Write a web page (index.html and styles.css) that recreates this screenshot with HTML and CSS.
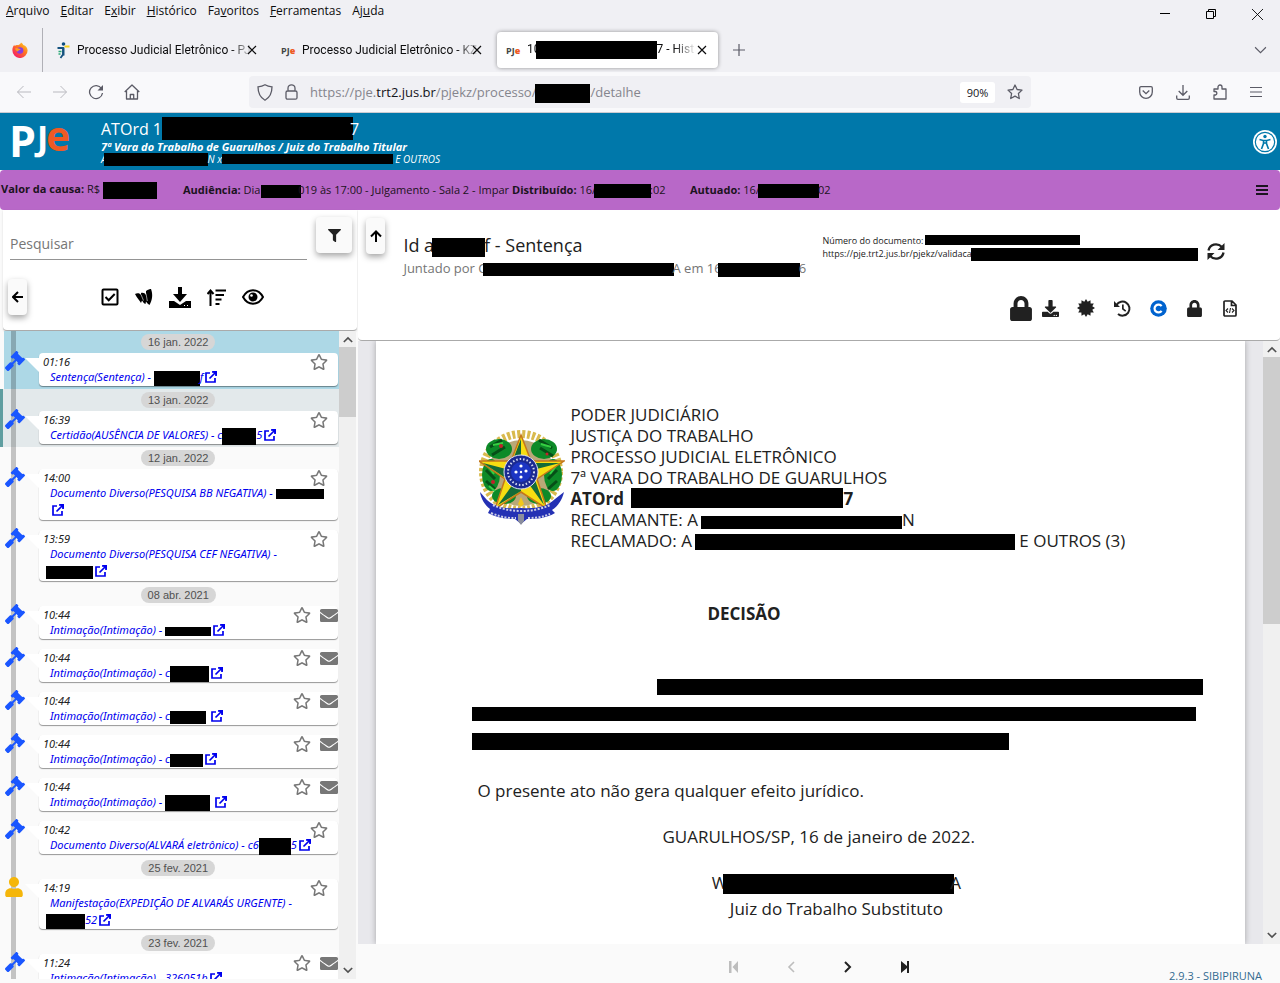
FILE: index.html
```html
<!DOCTYPE html>
<html lang="pt-BR">
<head>
<meta charset="utf-8">
<meta name="viewport" content="width=device-width, initial-scale=1">
<title>Processo Judicial Eletrônico</title>
<link rel="stylesheet" href="styles.css">
</head>
<body>
<svg class="defs" aria-hidden="true">
  <symbol id="gavel" viewBox="0 0 512 512"><path d="M504.971 199.362l-22.627-22.627c-9.373-9.373-24.569-9.373-33.941 0l-5.657 5.657L329.608 69.255l5.657-5.657c9.373-9.373 9.373-24.569 0-33.941L312.638 7.029c-9.373-9.373-24.569-9.373-33.941 0L154.246 131.48c-9.373 9.373-9.373 24.569 0 33.941l22.627 22.627c9.373 9.373 24.569 9.373 33.941 0l5.657-5.657 39.598 39.598-81.04 81.04-5.657-5.657c-12.497-12.497-32.758-12.497-45.255 0L9.373 412.118c-12.497 12.497-12.497 32.758 0 45.255l45.255 45.255c12.497 12.497 32.758 12.497 45.255 0l114.745-114.745c12.497-12.497 12.497-32.758 0-45.255l-5.657-5.657 81.04-81.04 39.598 39.598-5.657 5.657c-9.373 9.373-9.373 24.569 0 33.941l22.627 22.627c9.373 9.373 24.569 9.373 33.941 0l124.451-124.451c9.372-9.372 9.372-24.568 0-33.941z"/></symbol>
  <symbol id="star" viewBox="0 0 576 512"><path d="M528.1 171.5L382 150.2 316.7 17.8c-11.7-23.6-45.6-23.9-57.4 0L194 150.2 47.9 171.5c-26.2 3.8-36.7 36.1-17.7 54.6l105.7 103-25 145.5c-4.5 26.3 23.2 46 46.4 33.7L288 439.6l130.7 68.7c23.2 12.2 50.9-7.4 46.4-33.7l-25-145.5 105.7-103c19-18.5 8.5-50.8-17.7-54.6zM388.6 312.3l23.7 138.4L288 385.4l-124.3 65.3 23.7-138.4-100.6-98 139-20.2 62.2-126 62.2 126 139 20.2-100.6 98z"/></symbol>
  <symbol id="mail" viewBox="0 64 512 384" preserveAspectRatio="none"><path d="M502.3 190.8c3.9-3.1 9.7-.2 9.7 4.7V400c0 26.5-21.5 48-48 48H48c-26.5 0-48-21.5-48-48V195.6c0-5 5.7-7.8 9.7-4.7 22.4 17.4 52.1 39.5 154.1 113.6 21.1 15.4 56.7 47.8 92.2 47.6 35.7.3 72-32.8 92.3-47.6 102-74.1 131.6-96.3 154-113.7zM256 320c23.2.4 56.6-29.2 73.4-41.4 132.7-96.3 142.8-104.7 173.4-128.7 5.8-4.5 9.2-11.5 9.2-18.9v-19c0-26.5-21.5-48-48-48H48c-26.5 0-48 21.5-48 48v19c0 7.4 3.4 14.3 9.2 18.9 30.6 23.9 40.7 32.4 173.4 128.7 16.8 12.2 50.2 41.8 73.4 41.4z"/></symbol>
  <symbol id="ext" viewBox="0 0 12 12"><path d="M5 2H1v9h9V7M7 1h4v4M11 1L4.500 7.500" fill="none" stroke="currentColor" stroke-width="1.700"/><path d="M7 0h5v5z"/></symbol>
  <symbol id="lock" viewBox="0 0 448 512"><path d="M400 224h-24v-72C376 68.200 307.800 0 224 0S72 68.200 72 152v72H48c-26.500 0-48 21.500-48 48v192c0 26.500 21.500 48 48 48h352c26.500 0 48-21.500 48-48V272c0-26.500-21.500-48-48-48zm-104 0H152v-72c0-39.700 32.300-72 72-72s72 32.300 72 72v72z"/></symbol>
  <symbol id="download" viewBox="0 0 512 512"><path d="M216 0h80c13.300 0 24 10.700 24 24v168h87.700c17.800 0 26.700 21.500 14.100 34.100L269.700 378.300c-7.500 7.500-19.800 7.500-27.300 0L90.100 226.100c-12.600-12.600-3.700-34.100 14.100-34.100H192V24c0-13.300 10.700-24 24-24zm296 376v112c0 13.300-10.700 24-24 24H24c-13.300 0-24-10.700-24-24V376c0-13.300 10.700-24 24-24h146.700l49 49c20.100 20.100 52.500 20.100 72.600 0l49-49H488c13.300 0 24 10.700 24 24zm-124 88c0-11-9-20-20-20s-20 9-20 20 9 20 20 20 20-9 20-20zm64 0c0-11-9-20-20-20s-20 9-20 20 9 20 20 20 20-9 20-20z"/></symbol>
  <symbol id="user" viewBox="0 0 448 512"><path d="M224 256c70.700 0 128-57.300 128-128S294.700 0 224 0 96 57.300 96 128s57.300 128 128 128zm89.600 32h-16.700c-22.200 10.200-46.900 16-72.900 16s-50.600-5.800-72.900-16h-16.700C60.200 288 0 348.200 0 422.400V464c0 26.500 21.500 48 48 48h352c26.500 0 48-21.500 48-48v-41.600c0-74.200-60.200-134.400-134.400-134.400z"/></symbol>
  <symbol id="x" viewBox="0 0 10 10"><path d="M1 1l8 8M9 1L1 9" fill="none" stroke="currentColor" stroke-width="1.200"/></symbol>
  <symbol id="arrow" viewBox="0 0 16 16"><path d="M15 8H1.500M7.500 2l-6 6 6 6" fill="none" stroke="currentColor"/></symbol>
  <symbol id="chev" viewBox="0 0 12 8"><path d="M1 1l5 5 5-5" fill="none" stroke="currentColor"/></symbol>
  <symbol id="bars" viewBox="0 0 12 12"><path d="M0 1.500h12M0 6h12M0 10.500h12" fill="none" stroke="currentColor" stroke-width="1.200"/></symbol>
</svg>

<header class="chrome">
  <nav class="menubar" aria-label="Menu">
    <button><u>A</u>rquivo</button><button><u>E</u>ditar</button><button>E<u>x</u>ibir</button><button><u>H</u>istórico</button><button>Fa<u>v</u>oritos</button><button><u>F</u>erramentas</button><button>Aj<u>u</u>da</button>
    <span class="winbtns">
      <button aria-label="Minimizar"><svg width="10" height="10" viewBox="0 0 10 10"><path d="M0 4.500h10" stroke="#000"/></svg></button>
      <button aria-label="Restaurar"><svg width="10" height="10" viewBox="0 0 10 10"><path d="M.5 2.500h7v7h-7zM2.500 2.500v-2h7v7h-2" fill="none" stroke="#000"/></svg></button>
      <button aria-label="Fechar"><svg width="11" height="11" viewBox="0 0 10 10"><path d="M0 0l10 10M10 0L0 10" stroke="#000" stroke-width=".8"/></svg></button>
    </span>
  </nav>
  <div class="tabs">
    <div class="pinned"><svg width="16" height="16" viewBox="0 0 16 16"><defs><linearGradient id="fx" x1="1" y1="0" x2=".2" y2="1"><stop offset="0" stop-color="#ffe226"/><stop offset=".45" stop-color="#ff7a1f"/><stop offset="1" stop-color="#f5156c"/></linearGradient></defs><path d="M9 .5c1.500.8 2 2 2.300 2.500 2.500.5 4.300 3 4.300 5.500A7.600 7.600 0 0 1 .4 8.400C.3 6 1 4.300 2.300 2.700c0 .7.200 1 .4 1.200C4 3 5 3 6 3.200 7.200 2.500 8.600 2 9 .5z" fill="url(#fx)"/><circle cx="8" cy="8.500" r="3.300" fill="#8a3ce0"/><path d="M3 6.500c1.500-1 3-.7 4 .2 1 0 1.500.3 1.700.8-1 .8-2.600.6-2.700 2-1 0-2.500-1-3-3z" fill="#ff9a1f"/></svg></div>
    <div class="tab">
      <svg width="15" height="17" viewBox="0 0 14 17"><circle cx="7" cy="2" r="1.800" fill="#0d4f80"/><path d="M1 6h5.500v6.500L4 16" fill="none" stroke="#14527f" stroke-width="1.800"/><path d="M7 5.500v8" stroke="#14527f" stroke-width="2"/><path d="M8 4.500h5" stroke="#f6d117" stroke-width="2"/><path d="M2 9.500h3M2 12h2" stroke="#2aa876" stroke-width="1.500"/></svg>
      <span class="tab-title">Processo Judicial Eletrônico - PJ</span>
      <button class="close" aria-label="Fechar aba"><svg width="10" height="10"><use href="#x"/></svg></button>
    </div>
    <div class="tab">
      <span class="fav">PJ<b>e</b></span>
      <span class="tab-title">Processo Judicial Eletrônico - KZ</span>
      <button class="close" aria-label="Fechar aba"><svg width="10" height="10"><use href="#x"/></svg></button>
    </div>
    <div class="tab active">
      <span class="fav">PJ<b>e</b></span>
      <span class="tab-title">10<i class="bar" style="width:121px;height:18px"></i>7 - Hist</span>
      <button class="close" aria-label="Fechar aba"><svg width="10" height="10"><use href="#x"/></svg></button>
    </div>
    <button class="newtab" aria-label="Nova aba"><svg width="12" height="12" viewBox="0 0 12 12"><path d="M6 0v12M0 6h12" stroke="#5b5b66" stroke-width="1.200"/></svg></button>
    <button class="alltabs" aria-label="Listar abas"><svg width="13" height="9"><use href="#chev"/></svg></button>
  </div>
  <div class="navbar">
    <div class="navbtns">
      <button class="off" aria-label="Voltar"><svg width="16" height="16"><use href="#arrow"/></svg></button>
      <button class="off flip" aria-label="Avançar"><svg width="16" height="16"><use href="#arrow"/></svg></button>
      <button aria-label="Recarregar"><svg width="16" height="16" viewBox="0 0 16 16"><path d="M13.500 4.500A6.500 6.500 0 1 0 14.500 9" fill="none" stroke="currentColor" stroke-width="1.300"/><path d="M15 1v5.500H9.500z" fill="currentColor"/></svg></button>
      <button aria-label="Início"><svg width="16" height="16" viewBox="0 0 16 16"><path d="M.7 8L8 1l7.300 7M2.500 7v8h11V7M6.300 15v-4.500h3.400V15" fill="none" stroke="currentColor" stroke-width="1.300" stroke-linejoin="round"/></svg></button>
    </div>
    <div class="urlbar">
      <svg width="16" height="17" viewBox="0 0 16 17"><path d="M8 .8c2 1.200 4 1.800 7 2 0 6-1.500 10.500-7 13.400C2.500 13.300 1 8.800 1 2.800c3-.2 5-.8 7-2z" fill="none" stroke="#5b5b66" stroke-width="1.300"/></svg>
      <svg width="13" height="16" viewBox="0 0 13 16"><path d="M3 7V4.300a3.500 3.500 0 0 1 7 0V7M2.500 7h8a1.500 1.500 0 0 1 1.500 1.500v5.200a1.500 1.500 0 0 1-1.500 1.500h-8A1.500 1.500 0 0 1 1 13.700V8.500A1.500 1.500 0 0 1 2.500 7z" fill="none" stroke="#5b5b66" stroke-width="1.300"/></svg>
      <span class="url">https://pje.<strong>trt2.jus.br</strong>/pjekz/processo/<i class="bar" style="width:55px;height:19px"></i>/detalhe</span>
      <button class="zoom">90%</button>
      <button aria-label="Favoritar"><svg width="16" height="16" viewBox="0 0 16 16"><path d="M8 1l2.100 4.500 4.900.6-3.600 3.400.9 5L8 12.100 3.700 14.500l.9-5L1 6.100l4.900-.6z" fill="none" stroke="currentColor" stroke-width="1.300" stroke-linejoin="round"/></svg></button>
    </div>
    <div class="tools">
      <button aria-label="Pocket"><svg width="14" height="13" viewBox="0 0 14 13"><path d="M2 .7h10A1.300 1.300 0 0 1 13.300 2v4A6.300 6.300 0 0 1 .7 6V2A1.300 1.300 0 0 1 2 .7zM3.700 4.500L7 7.700l3.300-3.200" fill="none" stroke="currentColor" stroke-width="1.300"/></svg></button>
      <button aria-label="Downloads"><svg width="14" height="15" viewBox="0 0 14 15"><path d="M7 0v10M2.700 6L7 10.300 11.300 6M.7 10.500V13a1.300 1.300 0 0 0 1.300 1.300h10a1.300 1.300 0 0 0 1.300-1.300v-2.500" fill="none" stroke="currentColor" stroke-width="1.300"/></svg></button>
      <button aria-label="Extensões"><svg width="14" height="16" viewBox="0 0 14 16"><path d="M1 5h4V3a2 2 0 0 1 4 0v2h4v10H1v-4h1.500a1.800 1.800 0 0 0 0-3.500H1z" fill="none" stroke="currentColor" stroke-width="1.300" stroke-linejoin="round"/></svg></button>
      <button aria-label="Abrir menu"><svg width="12" height="12"><use href="#bars"/></svg></button>
    </div>
  </div>
</header>

<section class="case">
  <svg class="logo" width="58" height="40" viewBox="0 0 58 40" role="img" aria-label="PJe"><text class="logo-p" x="-3" y="36">P</text><text class="logo-j" x="25" y="29">J</text><text class="logo-e" x="34" y="30">e</text></svg>
  <div class="case-text">
    <h1>ATOrd 1<i class="bar" style="width:191px;height:23px"></i>7</h1>
    <p class="court">7ª Vara do Trabalho de Guarulhos / Juiz do Trabalho Titular</p>
    <p class="parties">A<i class="bar" style="width:104px;height:13px"></i>N x <i class="bar" style="width:171px;height:10px"></i> E OUTROS</p>
  </div>
  <button class="a11y" aria-label="Acessibilidade"><svg width="24" height="24" viewBox="0 0 24 24"><circle cx="12" cy="12" r="12" fill="#fff"/><circle cx="12" cy="12" r="9.700" fill="none" stroke="#0078aa" stroke-width="1.200"/><circle cx="12" cy="6.500" r="1.700" fill="#0078aa"/><path d="M6.500 9.500l4 1v3l-2 5.500M17.500 9.500l-4 1v3l2 5.500M10 10.500h4M10.500 13h3" fill="none" stroke="#0078aa" stroke-width="1.600"/></svg></button>
</section>

<section class="info">
  <span class="causa"><b>Valor da causa:</b> R$ <i class="bar" style="width:54px;height:17px"></i></span>
  <span class="hearing"><b>Audiência:</b> Dia <i class="bar" style="width:40px;height:13px"></i>019 às 17:00 - Julgamento - Sala 2 - Impar</span>
  <span class="dist"><b>Distribuído:</b> 16/<i class="bar" style="width:57px;height:14px"></i>:02</span>
  <span><b>Autuado:</b> 16/<i class="bar" style="width:61px;height:14px"></i>02</span>
  <button aria-label="Menu do processo"><svg width="12" height="12" viewBox="0 0 12 12"><path d="M0 2h12M0 6h12M0 10h12" stroke="#1b1320" stroke-width="2"/></svg></button>
</section>

<main class="work">
  <aside class="side">
    <div class="side-head">
      <div class="search"><input type="text" placeholder="Pesquisar" aria-label="Pesquisar">
        <button class="raised square" aria-label="Filtrar"><svg width="13" height="13" viewBox="0 0 512 512"><path d="M487.976 0H24.028C2.710 0-8.047 25.866 7.058 40.971L192 225.941V432c0 7.831 3.821 15.170 10.237 19.662l80 55.980C298.020 518.690 320 507.493 320 487.980V225.941l184.947-184.970C520.021 25.896 509.338 0 487.976 0z"/></svg></button></div>
      <div class="side-tools">
        <button class="raised slim" aria-label="Recolher"><svg width="11" height="12" viewBox="0 0 11 12"><path d="M11 6H1.500M6 1L1 6l5 5" fill="none" stroke="#000" stroke-width="2"/></svg></button>
        <div class="acts">
          <button aria-label="Selecionar"><svg width="18" height="18" viewBox="0 0 18 18"><rect x="1.500" y="1.500" width="15" height="15" rx="1" fill="none" stroke="#000" stroke-width="2"/><path d="M4.500 9l3.200 3.200 6-6.200" fill="none" stroke="#000" stroke-width="2"/></svg></button>
          <button aria-label="Carteira"><svg width="18" height="18" viewBox="0 0 18 18"><path d="M0 6c2-1.300 5-1 6 1V5c2-.5 4 0 5 2V3c2-1.500 4-2 5-2 2 5 1.500 11-1.500 16-1.500-1-2.500-2-3.500-3.500l-.5 2.500C9 15.500 8 14 7 12.500L6 15C4.500 12 2 10 0 6z"/><path d="M6 6.500l2.500 6M11 5.500l1.300 7.500" stroke="#fff" stroke-width=".6"/></svg></button>
          <button aria-label="Baixar"><svg width="22" height="21" viewBox="0 0 22 21"><path d="M9 0h4v7h5l-7 8-7-8h5zM0 14h5l6 4 6-4h5v7H0z"/><path d="M15 18.500h1M18 18.500h1" stroke="#fff"/></svg></button>
          <button aria-label="Ordenar"><svg width="19" height="17" viewBox="0 0 19 17"><path d="M3.500 17V1.500M.5 5l3-3.500 3 3.500M8.500 1.500H19M8.500 6H17M8.500 10.500h6M8.500 15h4" fill="none" stroke="#000" stroke-width="2"/></svg></button>
          <button aria-label="Visualizar"><svg width="22" height="16" viewBox="0 0 22 16"><path d="M1 8c5-9 15-9 20 0-5 9-15 9-20 0z" fill="none" stroke="#000" stroke-width="2"/><circle cx="11" cy="8" r="4.500"/><circle cx="9.500" cy="6.500" r="1.300" fill="#fff"/></svg></button>
        </div>
      </div>
    </div>
    <div class="list-wrap">
      <div class="list">
        <section class="day current"><h2>16 jan. 2022</h2>
          <article><svg class="mark"><use href="#gavel"/></svg><time>01:16</time><a href="#">Sentença(Sentença) - <i class="bar" style="width:46px;height:15px"></i>f<svg class="ext"><use href="#ext"/></svg></a><span class="flags"><button aria-label="Favorito"><svg class="star"><use href="#star"/></svg></button></span></article></section>
        <section class="day next"><h2>13 jan. 2022</h2>
          <article><svg class="mark"><use href="#gavel"/></svg><time>16:39</time><a href="#">Certidão(AUSÊNCIA DE VALORES) - c<i class="bar" style="width:34px;height:17px"></i>5<svg class="ext"><use href="#ext"/></svg></a><span class="flags"><button aria-label="Favorito"><svg class="star"><use href="#star"/></svg></button></span></article></section>
        <section class="day"><h2>12 jan. 2022</h2>
          <article class="tall"><svg class="mark"><use href="#gavel"/></svg><time>14:00</time><a href="#">Documento Diverso(PESQUISA BB NEGATIVA) - <i class="bar" style="width:48px;height:10px"></i><br><svg class="ext"><use href="#ext"/></svg></a><span class="flags"><button aria-label="Favorito"><svg class="star"><use href="#star"/></svg></button></span></article>
          <article class="tall"><svg class="mark"><use href="#gavel"/></svg><time>13:59</time><a href="#">Documento Diverso(PESQUISA CEF NEGATIVA) -<br><i class="bar out" style="width:47px;height:13px"></i><svg class="ext"><use href="#ext"/></svg></a><span class="flags"><button aria-label="Favorito"><svg class="star"><use href="#star"/></svg></button></span></article></section>
        <section class="day"><h2>08 abr. 2021</h2>
          <article><svg class="mark"><use href="#gavel"/></svg><time>10:44</time><a href="#">Intimação(Intimação) - <i class="bar" style="width:46px;height:9px"></i><svg class="ext"><use href="#ext"/></svg></a><span class="flags"><button aria-label="Favorito"><svg class="star"><use href="#star"/></svg></button><svg class="mail"><use href="#mail"/></svg></span></article>
          <article><svg class="mark"><use href="#gavel"/></svg><time>10:44</time><a href="#">Intimação(Intimação) - c<i class="bar" style="width:39px;height:16px"></i><svg class="ext"><use href="#ext"/></svg></a><span class="flags"><button aria-label="Favorito"><svg class="star"><use href="#star"/></svg></button><svg class="mail"><use href="#mail"/></svg></span></article>
          <article><svg class="mark"><use href="#gavel"/></svg><time>10:44</time><a href="#">Intimação(Intimação) - c<i class="bar" style="width:36px;height:13px"></i> <svg class="ext"><use href="#ext"/></svg></a><span class="flags"><button aria-label="Favorito"><svg class="star"><use href="#star"/></svg></button><svg class="mail"><use href="#mail"/></svg></span></article>
          <article><svg class="mark"><use href="#gavel"/></svg><time>10:44</time><a href="#">Intimação(Intimação) - c<i class="bar" style="width:33px;height:13px"></i><svg class="ext"><use href="#ext"/></svg></a><span class="flags"><button aria-label="Favorito"><svg class="star"><use href="#star"/></svg></button><svg class="mail"><use href="#mail"/></svg></span></article>
          <article><svg class="mark"><use href="#gavel"/></svg><time>10:44</time><a href="#">Intimação(Intimação) - <i class="bar" style="width:45px;height:16px"></i> <svg class="ext"><use href="#ext"/></svg></a><span class="flags"><button aria-label="Favorito"><svg class="star"><use href="#star"/></svg></button><svg class="mail"><use href="#mail"/></svg></span></article>
          <article><svg class="mark"><use href="#gavel"/></svg><time>10:42</time><a href="#">Documento Diverso(ALVARÁ eletrônico) - c6<i class="bar" style="width:32px;height:17px"></i>5<svg class="ext"><use href="#ext"/></svg></a><span class="flags"><button aria-label="Favorito"><svg class="star"><use href="#star"/></svg></button></span></article></section>
        <section class="day"><h2>25 fev. 2021</h2>
          <article><svg class="mark person"><use href="#user"/></svg><time>14:19</time><a href="#">Manifestação(EXPEDIÇÃO DE ALVARÁS URGENTE) -<br><i class="bar out" style="width:39px;height:15px"></i>52<svg class="ext"><use href="#ext"/></svg></a><span class="flags"><button aria-label="Favorito"><svg class="star"><use href="#star"/></svg></button></span></article></section>
        <section class="day"><h2>23 fev. 2021</h2>
          <article><svg class="mark"><use href="#gavel"/></svg><time>11:24</time><a href="#">Intimação(Intimação) - 326051b<svg class="ext"><use href="#ext"/></svg></a><span class="flags"><button aria-label="Favorito"><svg class="star"><use href="#star"/></svg></button><svg class="mail"><use href="#mail"/></svg></span></article></section>
      </div>
      <div class="scroll"><svg class="up" width="10" height="7"><use href="#chev"/></svg><div class="thumb short"></div><svg width="10" height="7"><use href="#chev"/></svg></div>
    </div>
  </aside>

  <section class="viewer">
    <div class="doc-head">
      <button class="raised slim" aria-label="Subir"><svg width="12" height="12" viewBox="0 0 12 12"><path d="M6 12V2M1 6.500l5-5 5 5" fill="none" stroke="#000" stroke-width="2"/></svg></button>
      <div class="doc-title">
        <h2>Id a<i class="bar" style="width:53px;height:19px"></i>f - Sentença</h2>
        <p>Juntado por C<i class="bar" style="width:191px;height:13px"></i>A em 16<i class="bar" style="width:82px;height:14px"></i>6</p>
      </div>
      <div class="doc-side">
        <div class="doc-num">
          <p>Número do documento: <i class="bar" style="width:155px;height:10px"></i><br>https://pje.trt2.jus.br/pjekz/validaca<i class="bar" style="width:227px;height:13px"></i></p>
          <button aria-label="Atualizar"><svg width="18" height="17" viewBox="0 0 18 17"><path d="M1.500 7.500C2.500 1.500 10-1 15 4M16.500 9.500C15.500 15.500 8 18 3 13" fill="none" stroke="currentColor" stroke-width="2.300"/><path d="M17.500 0v7h-7zM.5 17v-7h7z"/></svg></button>
        </div>
        <div class="doc-tools">
          <button aria-label="Sigilo"><svg width="22" height="25"><use href="#lock"/></svg></button>
          <button aria-label="Baixar"><svg width="17" height="17"><use href="#download"/></svg></button>
          <button aria-label="Assinatura"><svg width="18" height="18" viewBox="-9 -9 18 18"><path d="M0-9l1.700 2.700L4.500-7.800l.1 3.200 3.200.1L6.300-1.700 9 0 6.300 1.700l1.500 2.800-3.200.1-.1 3.200-2.800-1.500L0 9l-1.700-2.700-2.800 1.500-.1-3.200-3.200-.1 1.500-2.800L-9 0l2.700-1.700-1.500-2.800 3.200-.1.100-3.200 2.800 1.500z"/></svg></button>
          <button aria-label="Histórico"><svg width="17" height="17" viewBox="0 0 17 17"><path d="M2.500 5A7 7 0 1 1 4 14" fill="none" stroke="currentColor" stroke-width="2"/><path d="M0 1v6h6zM8 4.500h1.700v4l2.500 2-1 1.300L8 9.300z"/></svg></button>
          <button aria-label="Certidão"><svg width="17" height="17" viewBox="0 0 17 17"><circle cx="8.500" cy="8.500" r="8.300" fill="#0063cf"/><path d="M11.600 6.200a3.900 3.900 0 1 0 0 4.600" fill="none" stroke="#fff" stroke-width="2.200"/></svg></button>
          <button aria-label="Restringir"><svg width="15" height="17"><use href="#lock"/></svg></button>
          <button aria-label="Código"><svg width="14" height="17" viewBox="0 0 14 17"><path d="M1 2a1 1 0 0 1 1-1h7l4 4v10a1 1 0 0 1-1 1H2a1 1 0 0 1-1-1zM8.500 1v4.500H13" fill="none" stroke="currentColor" stroke-width="1.700"/><path d="M5 8.500L3 10.500l2 2M9 8.500l2 2-2 2M7.500 8l-1 5" fill="none" stroke="currentColor" stroke-width="1.100"/></svg></button>
        </div>
      </div>
    </div>
    <div class="doc-body">
      <article class="paper">
        <header class="letter">
          <svg width="86" height="96" viewBox="0 0 86 96" role="img" aria-label="Brasão">
            <circle cx="42" cy="42" r="38" fill="none" stroke="#d9ba4e" stroke-width="8" stroke-dasharray="3 2"/>
            <circle cx="42" cy="43" r="33" fill="#b9a878"/>
            <g fill="#0d8a28"><ellipse cx="20" cy="19" rx="13" ry="10"/><ellipse cx="65" cy="19" rx="13" ry="10"/><ellipse cx="12" cy="45" rx="9" ry="16"/><ellipse cx="74" cy="45" rx="9" ry="16"/><ellipse cx="25" cy="66" rx="12" ry="8"/><ellipse cx="60" cy="66" rx="12" ry="8"/></g>
            <path d="M11 17l12-7M13 25l13-8M60 10l13 8M61 18l13 8M7 40l9 9M7 51l9 8M78 40l-9 9M78 51l-9 8" stroke="#064f17" stroke-width="3"/>
            <path d="M14 15l10-2M62 14l10 3M9 36l6 8M77 36l-6 8M10 56l6 5" stroke="#35cf42" stroke-width="2"/>
            <g fill="#c3202b"><circle cx="22" cy="16" r="2"/><circle cx="14" cy="52" r="2"/><circle cx="68" cy="24" r="1.500"/></g>
            <path d="M42 5l10 26 33 0-27 18 10 30-26-17-26 17 10-30L0 31h32z" fill="#f7dd12" stroke="#c4761b" stroke-width="1.500"/>
            <path d="M42 9v34L33 32zM81 33L42 43l11-10zM65 75L42 43l14 7zM19 75l23-32v18zM4 33l38 10-14 6z" fill="#146b38"/>
            <circle cx="42" cy="42" r="17" fill="#1b2a92" stroke="#dfe3f5"/><circle cx="42" cy="42" r="13" fill="none" stroke="#d5daf0" stroke-width="2" stroke-dasharray="1.500 2"/><circle cx="42" cy="42" r="10" fill="#1c35c4"/>
            <g fill="#fff"><circle cx="42" cy="36" r="1.600"/><circle cx="37" cy="42" r="1.600"/><circle cx="47" cy="41" r="1.600"/><circle cx="42" cy="47" r="1.600"/><circle cx="42" cy="42" r="1.200"/></g>
            <path d="M1 62l7 8c9 8 20 9 34 8 15 1 26-1 34-9l9-7c-2 8-6 14-12 18l3 3c-8 5-18 6-28 6l-6 5-6-5c-11 0-20-2-27-6l2-4C6 75 2 69 1 62z" fill="#2431b4"/>
            <path d="M14 75c16 8 41 8 57 0M12 83c12 5 18 5 25 5M49 88c9 0 15-1 22-4" fill="none" stroke="#cfd0e6" stroke-width="2" stroke-dasharray="2 1.500"/>
            <path d="M42 67l3 7-3 3-3-3z" fill="#f2c81a"/><path d="M39 84h6v7l-3 4-3-4z" fill="#8b8e9c"/>
          </svg>
          <p>PODER JUDICIÁRIO<br>JUSTIÇA DO TRABALHO<br>PROCESSO JUDICIAL ELETRÔNICO<br>7ª VARA DO TRABALHO DE GUARULHOS<br><b>ATOrd <i class="bar" style="width:212px;height:20px"></i>7</b><br>RECLAMANTE: A<i class="bar" style="width:201px;height:13px"></i>N<br>RECLAMADO: A<i class="bar" style="width:320px;height:16px"></i> E OUTROS (3)</p>
        </header>
        <h3>DECISÃO</h3>
        <div class="blacked"><i class="bar first" style="width:546px;height:16px"></i><i class="bar" style="width:724px;height:14px"></i><i class="bar" style="width:537px;height:17px"></i></div>
        <p class="effect">O presente ato não gera qualquer efeito jurídico.</p>
        <p class="place">GUARULHOS/SP, 16 de janeiro de 2022.</p>
        <p class="judge">W<i class="bar" style="width:231px;height:20px"></i>A<br>Juiz do Trabalho Substituto</p>
      </article>
      <div class="scroll"><svg class="up" width="10" height="7"><use href="#chev"/></svg><div class="thumb long"></div><svg width="10" height="7"><use href="#chev"/></svg></div>
    </div>
    <footer class="pager">
      <div class="pages">
        <button class="off" aria-label="Primeiro"><svg width="10" height="12" viewBox="0 0 10 12"><path d="M0 0h2.500v12H0zM9 0v12L3.500 6z"/></svg></button>
        <button class="off" aria-label="Anterior"><svg width="8" height="12" viewBox="0 0 8 12"><path d="M7 1L2 6l5 5" fill="none" stroke="currentColor" stroke-width="1.600"/></svg></button>
        <button aria-label="Próximo"><svg width="8" height="12" viewBox="0 0 8 12"><path d="M1 1l5 5-5 5" fill="none" stroke="currentColor" stroke-width="2"/></svg></button>
        <button aria-label="Último"><svg width="10" height="12" viewBox="0 0 10 12"><path d="M1 0v12l6-5v5h2V0H7v5z"/></svg></button>
      </div>
      <span class="version">2.9.3 - SIBIPIRUNA</span>
    </footer>
  </section>
</main>
</body>
</html>
```
FILE: styles.css
```css
* { box-sizing: border-box; }
html, body { height: 100%; }
body {
  margin: 0;
  display: flex;
  flex-direction: column;
  overflow: hidden;
  background: #fafafa;
  color: #212121;
  font-family: "Open Sans", "Noto Sans", sans-serif;
  font-size: 12px;
}
h1, h2, h3, p { margin: 0; font-weight: 400; }
button {
  border: 0;
  padding: 0;
  background: none;
  font: inherit;
  color: inherit;
  display: inline-flex;
  align-items: center;
  justify-content: center;
}
svg { fill: currentColor; flex: none; }
.defs { position: absolute; width: 0; height: 0; }
.bar { display: inline-block; background: #000; vertical-align: middle; flex: none; }

/* browser frame */
.chrome { flex: none; border-bottom: 1px solid #ccccd2; color: #0c0c0d; }
.menubar { display: flex; height: 28px; padding-left: 6px; gap: 11px; background: #f0f0f4; }
.menubar > button { height: 20px; }
.winbtns { margin-left: auto; display: flex; padding-right: 17px; gap: 36px; }
.tabs { display: flex; height: 44px; background: #f0f0f4; align-items: center; }
.pinned { width: 43px; height: 44px; border-right: 1px solid #b0b0b6; display: flex; align-items: center; padding-left: 12px; }
.tab { display: flex; align-items: center; height: 36px; width: 221px; margin-left: 4px; padding: 0 11px 0 9px; gap: 6px; border-radius: 4px; }
.tab .close { width: 10px; margin-left: auto; }
.tab-title {
  flex: none;
  font-family: Roboto, "Open Sans", sans-serif;
  white-space: nowrap;
  margin-right: -12px;
  -webkit-mask-image: linear-gradient(to right, #000 calc(100% - 20px), rgba(0, 0, 0, .1));
  mask-image: linear-gradient(to right, #000 calc(100% - 20px), rgba(0, 0, 0, .1));
}
.tab-title .bar { margin-left: -5px; }
.active { background: #fff; box-shadow: 0 0 4px rgba(0, 0, 0, .4); }
.fav { font-size: 9px; font-weight: 700; color: #444; width: 15px; }
.fav b { color: #ee5a24; }
.newtab { width: 12px; margin-left: 15px; }
.alltabs { margin: 0 13px 0 auto; color: #5b5b66; }
.navbar { display: flex; height: 40px; background: #f9f9fb; align-items: center; color: #5b5b66; }
.navbtns { display: flex; gap: 20px; padding-left: 16px; width: 249px; }
.navbtns .off { color: #b9b9bf; }
.flip { transform: scaleX(-1); }
.urlbar { flex: 1; display: flex; align-items: center; height: 32px; background: #f0f0f4; border-radius: 4px; padding: 0 8px; gap: 12px; }
.url { flex: 1; font-size: 13px; color: #85858d; white-space: nowrap; padding-top: 2px; }
.url .bar { margin-left: -1px; }
.url strong { color: #15141a; font-weight: 400; }
.zoom { background: #fff; color: #15141a; border-radius: 3px; height: 21px; width: 35px; font-size: 11px; }
.tools { display: flex; gap: 23px; padding: 0 18px 0 108px; align-items: center; }

/* case header */
.case { flex: none; display: flex; height: 57px; background: #0078aa; color: #fff; padding: 0 3px 0 12px; }
.logo { margin-top: 8px; font-family: "Open Sans", sans-serif; font-weight: 700; overflow: visible; }
.logo-p { font-size: 43px; fill: #fff; }
.logo-j { font-size: 34px; fill: #fff; }
.logo-e { font-size: 41px; fill: #ee5a24; }
.case-text { margin-left: 31px; padding-top: 5px; white-space: nowrap; }
.case h1 { font-size: 16px; line-height: 22px; height: 22px; }
.case h1 .bar { margin: -3px -3px 0 0; vertical-align: -5px; }
.court { font-size: 11px; line-height: 13px; font-weight: 700; font-style: italic; }
.parties { font-size: 10px; line-height: 12px; font-style: italic; }
.parties .bar { margin: -2px 0 0 -3px; }
.a11y { margin-left: auto; }

.info { flex: none; display: flex; align-items: center; height: 40px; background: #b868c8; border-radius: 4px; color: #1b1320; font-size: 11px; padding: 0 12px 0 1px; white-space: nowrap; }
.info .bar { margin: 0 -1px 0 -2px; }
.causa { width: 182px; }
.causa .bar { margin-left: 0; }
.hearing { margin-right: 3px; }
.hearing .bar { margin: 0 -3px 0 -2px; }
.dist { width: 178px; }
.info button { margin-left: auto; }

.work { flex: 1; min-height: 0; display: flex; }

/* timeline */
.side { width: 28%; display: flex; flex-direction: column; min-width: 0; }
.side-head { flex: none; height: 121px; margin: 0 1px 0 3px; padding: 7px 5px 0; background: #fff; border-bottom: 1px solid #aaa; border-radius: 0 0 4px 4px; box-shadow: 0 1px 2px rgba(0, 0, 0, .15); }
.search { display: flex; gap: 9px; }
.search input { flex: 1; min-width: 0; height: 43px; margin-left: 2px; padding: 11px 0 0; border: 0; border-bottom: 1px solid #949494; background: none; font: 14px "Open Sans", sans-serif; outline: 0; }
.search input::placeholder { color: #767676; }
.raised { background: #fafafa; border-radius: 4px; box-shadow: 0 3px 6px rgba(0, 0, 0, .35); flex: none; height: 36px; }
.square { width: 36px; }
.slim { width: 19px; }
.side-tools { display: flex; margin-top: 10px; height: 54px; align-items: center; }
.acts { flex: 1; display: flex; justify-content: center; align-items: center; gap: 16px; color: #000; margin: 0 15px 0 0; height: 36px; }
.list-wrap { flex: 1; min-height: 0; display: flex; margin-bottom: 4px; }
.list { flex: 1; min-width: 0; overflow: hidden; }
.day { position: relative; margin-left: 4px; padding: 3px 0 3px 35px; display: flex; flex-direction: column; }
.day::before { content: ""; position: absolute; left: 7px; top: 0; bottom: 0; width: 5px; background: rgba(0, 0, 0, .22); }
.current { background: #add8e6; }
.next { background: #e3e9eb; margin-left: 0; border-left: 3px solid #5f9ea0; padding-left: 36px; }
.next::before { left: 8px; }
.day h2 { align-self: center; margin: 0 22px 3px 0; padding: 0 7px; height: 16px; border-radius: 8px; background: #d6d6d6; color: #505050; font: 11px/16px "Liberation Sans", Arial, sans-serif; }
.day article { position: relative; background: #fff; border-radius: 4px; margin-right: 1px; padding: 2px 0 1px 4px; box-shadow: 0 1px 1px rgba(0, 0, 0, .4); font-family: "Noto Sans", "Open Sans", sans-serif; font-size: 11px; font-style: italic; display: flex; flex-direction: column; align-items: flex-start; white-space: nowrap; }
.day article.tall { padding-bottom: 2px; }
.day article + article { margin-top: 10px; }
.day article::before { content: ""; position: absolute; left: -14px; top: 5px; width: 15px; height: 15px; background: #fff; clip-path: polygon(0 0, 100% 0, 100% 100%); }
.day time { line-height: 14px; }
.day a { color: #0000ee; line-height: 17px; padding-left: 7px; text-decoration: none; margin-top: -1px; }
.day .bar { margin: -4px 0; }
.day .out { margin-left: -4px; }
.mark { position: absolute; left: -34px; top: -2px; width: 20px; height: 20px; color: #1a56ff; }
.person { color: #f5b60a; left: -35px; }
.ext { width: 12px; height: 12px; margin: -3px 0 -3px 2px; vertical-align: 1px; }
.flags { position: absolute; right: 0; top: 1px; display: flex; align-items: center; gap: 9px; color: #777; }
.star { width: 18px; height: 16px; }
.flags > :last-child:not(.mail) { margin-right: 10px; }
.mail { width: 18px; height: 13px; }

.scroll { width: 17px; flex: none; background: #f0f0f0; display: flex; flex-direction: column; align-items: center; padding: 5px 0; color: #505050; stroke-width: 2; }
.scroll svg { margin-top: auto; }
.scroll .up { transform: rotate(180deg); margin: 0 0 4px; }
.thumb { width: 17px; background: #cdcdcd; }
.short { height: 11%; }
.long { height: 45%; }
.list-wrap .scroll { margin-right: 2px; }

/* document */
.viewer { flex: 1; min-width: 0; display: flex; flex-direction: column; }
.doc-head { flex: none; height: 131px; background: #fff; border-bottom: 1px solid #aaa; border-radius: 0 0 4px 4px; display: flex; padding: 8px 5px 0 8px; white-space: nowrap; }
.doc-title { padding: 15px 0 0 18px; width: 437px; }
.doc-title h2 { font-size: 18px; line-height: 24px; }
.doc-title p { font-size: 13px; line-height: 22px; color: #757575; }
.doc-title .bar { margin: 0 -1px 0 -4px; }
.doc-title h2 .bar { margin: 0 -1px 0 -2px; }
.doc-side { flex: 1; display: flex; flex-direction: column; }
.doc-num { display: flex; align-items: flex-end; gap: 9px; height: 42px; font-size: 9px; line-height: 13px; }
.doc-num .bar { vertical-align: top; margin: 1px 0 -1px -1px; }
.doc-tools { display: flex; justify-content: flex-end; align-items: center; margin-top: 30px; padding-right: 27px; }
.doc-tools button { width: 36px; height: 36px; }
.doc-tools button:first-child { width: 22px; }
.doc-body { flex: 1; min-height: 0; display: flex; background: #e8e8ec; padding-left: 18px; overflow: hidden; }
.paper { flex: 1; min-width: 0; background: #fff; margin-right: 18px; padding: 63px 20px 0 96px; box-shadow: 0 0 6px rgba(0, 0, 0, .3); font-size: 17px; line-height: 26px; white-space: nowrap; overflow: hidden; }
.letter { display: flex; gap: 5px; padding-left: 7px; align-items: center; }
.letter p { line-height: 21px; height: 147px; }
.letter .bar { vertical-align: -3px; margin-left: 3px; }
.paper h3 { font-size: 17px; font-weight: 700; margin: 50px 0 0 235px; }
.blacked { display: flex; flex-direction: column; align-items: flex-start; gap: 12px; padding-top: 52px; }
.first { margin-left: 185px; }
.effect { margin: 28px 0 0 5px; }
.place { margin: 20px 0 0 190px; }
.judge { margin-top: 20px; width: 728px; text-align: center; }
.judge .bar { margin: 0 -4px; }
.pager { flex: none; height: 39px; display: grid; grid-template-columns: 1fr auto 1fr; padding: 0 18px; }
.pages { grid-column: 2; display: flex; align-items: center; padding-top: 7px; }
.pages button { width: 57px; }
.pages .off { color: #bdbdbd; }
.version { justify-self: end; align-self: end; font-size: 11px; line-height: 15px; color: #336a90; }
```
